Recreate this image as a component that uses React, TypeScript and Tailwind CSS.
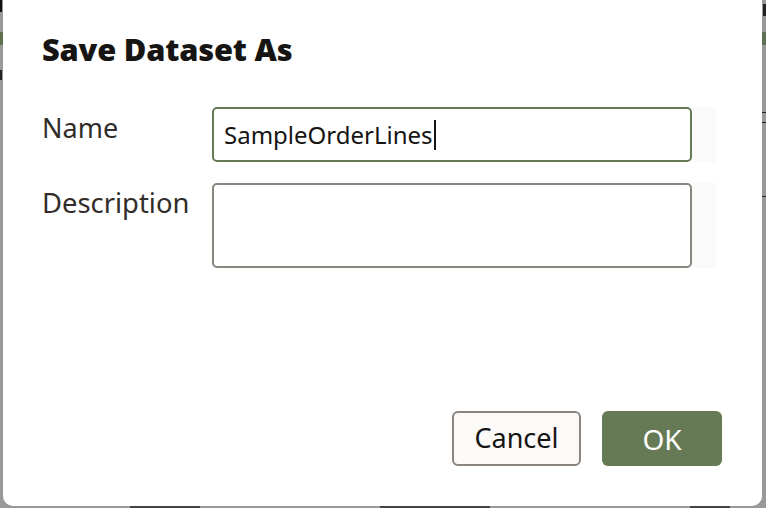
import React, { useState } from "react";

const font = { fontFamily: '"Noto Sans", "Open Sans", sans-serif' };

export default function App() {
  const [description, setDescription] = useState("");
  const name = "SampleOrderLines";

  return (
    <div className="relative h-[508px] w-[766px] overflow-hidden bg-[#999999]" style={font}>
      {/* page behind the overlay */}
      <div className="absolute left-0 right-0 top-[32px] h-[13px] bg-[#5f7050]" />
      <div className="absolute left-0 top-0 h-[12px] w-[2px] bg-[#111]" />
      <div className="absolute left-0 top-[70px] h-[10px] w-[2px] bg-[#222]" />
      <div className="absolute right-0 top-[4px] h-[12px] w-[3px] bg-[#222]" />
      <div className="absolute right-0 top-[112px] h-px w-[4px] bg-[#222]" />
      <div className="absolute right-0 top-[122px] h-px w-[4px] bg-[#222]" />
      <div className="absolute right-0 top-[196px] h-px w-[4px] bg-[#222]" />
      <div className="absolute bottom-0 left-[130px] h-[2px] w-[70px] bg-[#444]" />
      <div className="absolute bottom-0 left-[380px] h-[2px] w-[110px] bg-[#444]" />
      <div className="absolute bottom-0 left-[690px] h-[2px] w-[40px] bg-[#444]" />

      {/* dialog */}
      <div className="absolute left-[3px] top-[-12px] flex h-[518px] w-[759px] flex-col rounded-[10px] bg-white">
        <div className="px-[39px] pt-[42px]">
          <h1 className="text-[30.8px] font-black leading-[38px] tracking-[-0.2px] text-[#161513]">
            Save Dataset As
          </h1>
        </div>

        <div className="mt-[39px] flex flex-col gap-[21px] pl-[39px]">
          <div className="flex items-start">
            <label className="w-[170px] pt-[3px] text-[27px] leading-[36px] text-[#312d2a]">Name</label>
            <div className="flex h-[55px] w-[480px] items-center rounded-[5px] border-2 border-[#667b55] bg-white px-[10px] text-[24px] text-[#161513]">
              <span>{name}</span>
              <span className="ml-px h-[30px] w-[2px] bg-[#161513]" />
            </div>
            <div className="h-[55px] w-[24px] bg-[#fafafa]" />
          </div>
          <div className="flex items-start">
            <label className="w-[170px] pt-[2px] text-[27.4px] leading-[36px] text-[#312d2a]">Description</label>
            <textarea
              value={description}
              onChange={(e) => setDescription(e.target.value)}
              className="h-[85px] w-[480px] resize-none rounded-[5px] border-2 border-[#8b8580] bg-white px-[10px] py-[8px] text-[24px] outline-none"
              style={font}
            />
            <div className="h-[85px] w-[24px] bg-[#fafafa]" />
          </div>
        </div>

        <div className="mt-auto flex justify-end gap-[21px] pb-[40px] pr-[40px]">
          <button className="h-[55px] w-[129px] rounded-[6px] border-2 border-[#8b8580] bg-[#fbfaf9] text-[27px] text-[#161513]">
            Cancel
          </button>
          <button className="h-[55px] w-[120px] rounded-[6px] bg-[#667b55] text-[28px] text-white">
            OK
          </button>
        </div>
      </div>
    </div>
  );
}
